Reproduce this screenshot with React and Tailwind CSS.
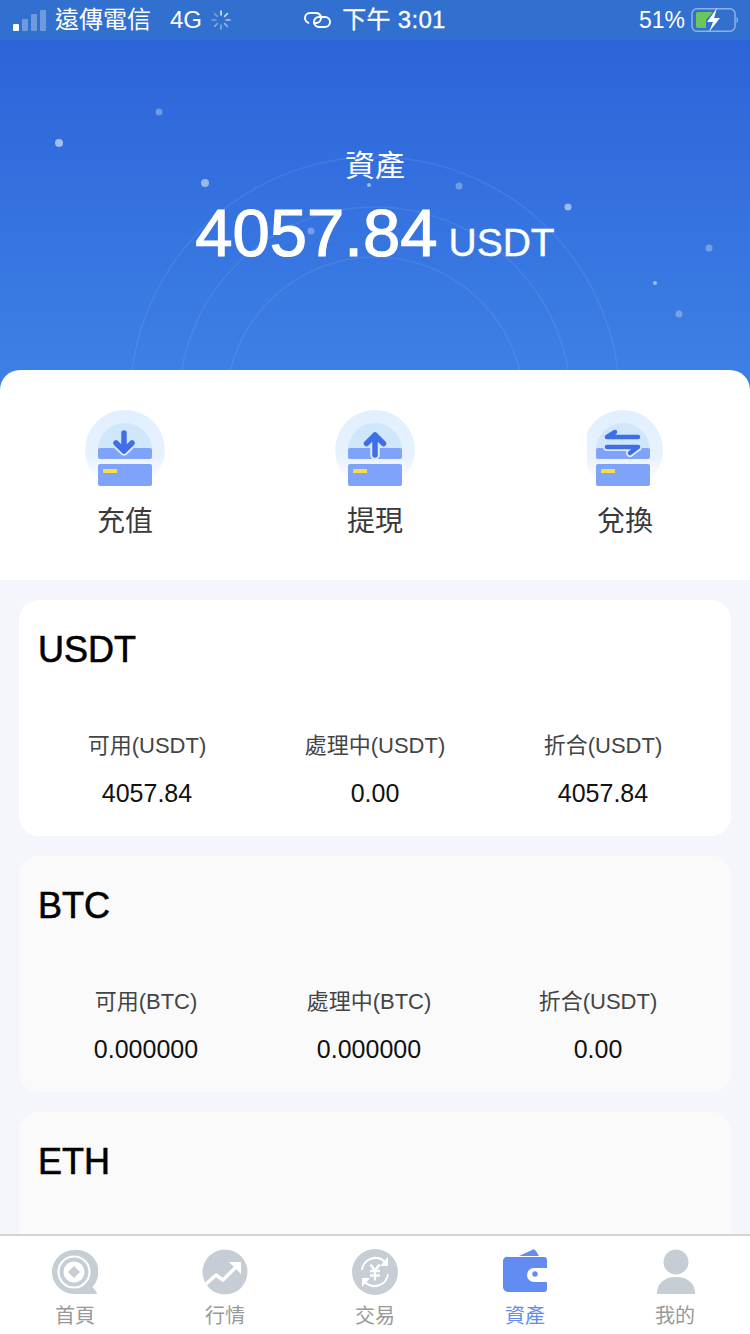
import React from 'react'

const FONT = "font-['Liberation_Sans','Noto_Sans_CJK_TC',sans-serif]"

const COINS = [
  {
    name: 'USDT',
    bg: 'bg-white',
    grid: 'grid-cols-[228px_228px_228px]',
    cols: [
      ['可用(USDT)', '4057.84'],
      ['處理中(USDT)', '0.00'],
      ['折合(USDT)', '4057.84'],
    ],
  },
  {
    name: 'BTC',
    bg: 'bg-[#fafafa]',
    grid: 'grid-cols-[226px_220px_238px]',
    cols: [
      ['可用(BTC)', '0.000000'],
      ['處理中(BTC)', '0.000000'],
      ['折合(USDT)', '0.00'],
    ],
  },
  { name: 'ETH', bg: 'bg-[#fafafa]', grid: 'grid-cols-3', cols: [] },
]

function StatusBar() {
  return (
    <div className="grid h-10 shrink-0 grid-cols-[1fr_auto_1fr] items-center bg-[#3270d0] text-white">
      <div className="flex items-center pl-[13px]">
        <div className="flex items-end gap-[3px]">
          <span className="h-[7px] w-1.5 rounded-[1px] bg-white" />
          <span className="h-3 w-1.5 rounded-[1px] bg-white/30" />
          <span className="h-[17px] w-1.5 rounded-[1px] bg-white/30" />
          <span className="h-[21px] w-1.5 rounded-[1px] bg-white/30" />
        </div>
        <span className="ml-[9px] text-[24px] leading-none">遠傳電信</span>
        <span className="ml-[19px] text-[24px] leading-none">4G</span>
        <svg className="ml-[9px]" width="20" height="20" viewBox="0 0 20 20" stroke="#fff" strokeWidth="1.5" strokeLinecap="round">
          <path d="M10 1v4" opacity="0.9" />
          <path d="M16.400 3.600l-2.800 2.800" opacity="0.75" />
          <path d="M19 10h-4" opacity="0.6" />
          <path d="M16.400 16.400l-2.800-2.800" opacity="0.5" />
          <path d="M10 19v-4" opacity="0.45" />
          <path d="M3.600 16.400l2.800-2.800" opacity="0.4" />
          <path d="M1 10h4" opacity="0.35" />
          <path d="M3.600 3.600l2.800 2.800" opacity="0.3" />
        </svg>
      </div>
      <div className="flex items-center">
        <svg width="27" height="16" viewBox="0 0 27 16" fill="none" stroke="#fff" strokeWidth="2">
          <rect x="1" y="1" width="16" height="10" rx="5" />
          <path d="M13 5h-1a5 5 0 0 0 0 10" stroke="#3270d0" strokeWidth="4" />
          <rect x="10" y="5" width="16" height="10" rx="5" />
          <path d="M17 6a5 5 0 0 1-4 5" stroke="#3270d0" strokeWidth="4" />
          <path d="M12 1a5 5 0 0 1 5 5 5 5 0 0 1-5 5" />
        </svg>
        <span className="ml-[11px] text-[24px] leading-none tracking-[0.3px] [-webkit-text-stroke:0.3px_white]">下午 3:01</span>
      </div>
      <div className="flex items-center justify-end pr-[11px]">
        <span className="text-[23px] leading-none">51%</span>
        <svg className="ml-[6px]" width="48" height="24" viewBox="0 0 48 24">
          <rect x="1" y="0.800" width="43" height="22.400" rx="5" fill="none" stroke="#fff" strokeOpacity="0.45" strokeWidth="1.500" />
          <path d="M45.500 9v6c1 0 1.500-1 1.500-3s-.5-3-1.500-3z" fill="#fff" opacity="0.45" />
          <path d="M7 4h15l-7 8v8H7a2 2 0 0 1-2-2V6a2 2 0 0 1 2-2z" fill="#6cc75b" />
          <path d="M26 0L16 14h6l-4 10 11-14h-6z" fill="#fff" />
        </svg>
      </div>
    </div>
  )
}

function HeroArt() {
  const dots = [
    [59, 103, 4, 0.55], [159, 72, 3.5, 0.3], [205, 143, 4, 0.5], [369, 145, 2, 0.5], [459, 146, 3.5, 0.3],
    [568, 167, 3.5, 0.5], [311, 191, 3.5, 0.3], [709, 208, 3.5, 0.3], [655, 243, 2, 0.5], [679, 274, 3.5, 0.3],
  ]
  return (
    <svg className="absolute inset-0" width="750" height="350" viewBox="0 0 750 350" fill="none">
      <circle cx="375" cy="362" r="245" stroke="#fff" strokeOpacity="0.08" strokeWidth="1.500" />
      <circle cx="375" cy="363" r="196" stroke="#fff" strokeOpacity="0.08" strokeWidth="1.500" />
      <circle cx="375" cy="366" r="149" stroke="#fff" strokeOpacity="0.08" strokeWidth="1.500" />
      {dots.map(([x, y, r, o], i) => (
        <circle key={i} cx={x} cy={y} r={r} fill="#fff" fillOpacity={o} />
      ))}
    </svg>
  )
}

function IconBase({ children, id }) {
  return (
    <svg width="80" height="80" viewBox="0 0 80 80" fill="none">
      <defs>
        <linearGradient id={`ring-${id}`} x1="0" y1="0" x2="0" y2="1">
          <stop offset="0" stopColor="#e1effe" />
          <stop offset="0.6" stopColor="#e8f2fe" />
          <stop offset="0.9" stopColor="#ffffff" />
        </linearGradient>
        <clipPath id={`band-${id}`}>
          <rect x="0" y="38" width="80" height="16" />
        </clipPath>
      </defs>
      <circle cx="40" cy="40" r="40" fill={`url(#ring-${id})`} />
      <path d="M13 40a27 27 0 0 1 54 0z" fill="#d0e6fb" />
      <rect x="13" y="38" width="54" height="11" rx="2" fill="#80a3fa" />
      <rect x="13" y="49" width="54" height="5" fill="#edf4fe" />
      <rect x="13" y="54" width="54" height="22" rx="2" fill="#80a3fa" />
      <rect x="18" y="59" width="14" height="4" fill="#f7dd4b" />
      {children}
    </svg>
  )
}

function DepositIcon() {
  return (
    <IconBase id="in">
      <g clipPath="url(#band-in)">
        <path d="M31 33l8 8 8-8" stroke="#dfeafd" strokeWidth="9.500" strokeLinecap="round" strokeLinejoin="round" />
      </g>
      <path d="M39 23v18M31 33l8 8 8-8" stroke="#3f6fe6" strokeWidth="5.500" strokeLinecap="round" strokeLinejoin="round" />
    </IconBase>
  )
}

function WithdrawIcon() {
  return (
    <IconBase id="out">
      <g clipPath="url(#band-out)">
        <path d="M40 26v19" stroke="#dfeafd" strokeWidth="9.500" strokeLinecap="round" />
      </g>
      <path d="M40 25v20M31.500 33.500L40 25l8.500 8.500" stroke="#3f6fe6" strokeWidth="5.500" strokeLinecap="round" strokeLinejoin="round" />
    </IconBase>
  )
}

function ExchangeIcon() {
  return (
    <div className="flex w-[76px] justify-end overflow-hidden">
      <div className="shrink-0">
        <IconBase id="swap">
          <g clipPath="url(#band-swap)">
            <path d="M24 37h31l-8 6" stroke="#dfeafd" strokeWidth="8" strokeLinecap="round" strokeLinejoin="round" />
          </g>
          <path d="M55 27H24l8-5" stroke="#3f6fe6" strokeWidth="4.500" strokeLinecap="round" strokeLinejoin="round" />
          <path d="M24 37h31l-8 6" stroke="#3f6fe6" strokeWidth="4.500" strokeLinecap="round" strokeLinejoin="round" />
        </IconBase>
      </div>
    </div>
  )
}

function Action({ icon, label }) {
  return (
    <div className="flex w-[250px] flex-col items-center">
      <div className="flex h-20 items-center justify-center">{icon}</div>
      <span className="mt-[14px] text-[28px] leading-[36px] text-[#3a3a3a]">{label}</span>
    </div>
  )
}

function CoinCard({ coin }) {
  return (
    <div className={`h-[236px] shrink-0 rounded-[20px] ${coin.bg} px-[14px]`}>
      <div className="pl-[5px] pt-[28px] text-[36px] leading-[44px] text-black [-webkit-text-stroke:0.6px_black]">{coin.name}</div>
      <div className={`mt-[59px] grid ${coin.grid}`}>
        {coin.cols.map(([label, value]) => (
          <div key={label} className="flex flex-col items-center">
            <span className="text-[22px] leading-[30px] text-[#444]">{label}</span>
            <span className="mt-[17px] text-[25px] leading-[30px] text-[#111]">{value}</span>
          </div>
        ))}
      </div>
    </div>
  )
}

const TAB_GRAY = '#c6cdd4'

function HomeIcon() {
  return (
    <svg width="46" height="46" viewBox="0 0 46 46">
      <path d="M22 1a22 22 0 1 0 0 44h22c1 0 1-1 .500-2l-4-5A22 22 0 0 0 22 1z" fill={TAB_GRAY} />
      <circle cx="22" cy="23" r="15.500" fill="none" stroke="#fff" strokeWidth="2.200" />
      <circle cx="22" cy="23" r="10.500" fill="#fff" />
      <path d="M22 17l6 6-6 6-6-6z" fill={TAB_GRAY} />
    </svg>
  )
}

function MarketIcon() {
  return (
    <svg width="46" height="46" viewBox="0 0 46 46">
      <circle cx="23" cy="23" r="22.500" fill={TAB_GRAY} />
      <path d="M4 35l10-9 7 5 14-14" fill="none" stroke="#fff" strokeWidth="3.500" strokeLinejoin="round" />
      <path d="M27 13h12v12z" fill="#fff" />
    </svg>
  )
}

function TradeIcon() {
  return (
    <svg width="46" height="46" viewBox="0 0 46 46">
      <circle cx="23" cy="23" r="23" fill={TAB_GRAY} />
      <g fill="none" stroke="#fff" strokeWidth="2">
        <path d="M10 21a13.500 13.500 0 0 1 23-8" />
        <path d="M36 25a13.500 13.500 0 0 1-23 8" />
        <path d="M18.500 15.500l4.500 6 4.500-6M23 21.500v10M18 22h10M18 26.500h10" strokeWidth="2.300" />
      </g>
      <path d="M36 8v9h-8z" fill="#fff" />
      <path d="M10 38v-9h8z" fill="#fff" />
    </svg>
  )
}

function WalletIcon() {
  return (
    <svg width="46" height="46" viewBox="0 0 46 46">
      <path d="M17 7l13-6c2-1 3 0 4 1l3 5z" fill="#628cf2" />
      <path d="M6 8h36a3 3 0 0 1 3 3v8H32a5.500 5.500 0 0 0 0 14h13v7a3 3 0 0 1-3 3H6a5 5 0 0 1-5-5V12a4 4 0 0 1 5-4z" fill="#628cf2" />
      <circle cx="33" cy="25" r="2.700" fill="#628cf2" />
    </svg>
  )
}

function UserIcon() {
  return (
    <svg width="46" height="46" viewBox="0 0 46 46">
      <circle cx="24" cy="13" r="12.500" fill={TAB_GRAY} />
      <path d="M5 44c0-10 8-16 19-16s19 6 19 16c0 1-1 1-2 1H7c-1 0-2 0-2-1z" fill={TAB_GRAY} />
    </svg>
  )
}

const TABS = [
  { label: '首頁', icon: <HomeIcon /> },
  { label: '行情', icon: <MarketIcon /> },
  { label: '交易', icon: <TradeIcon /> },
  { label: '資產', icon: <WalletIcon />, active: true },
  { label: '我的', icon: <UserIcon /> },
]

export default function App() {
  return (
    <div className={`flex h-[1334px] w-[750px] flex-col overflow-hidden bg-[#f5f6fb] ${FONT}`}>
      <StatusBar />
      <div className="relative h-[350px] shrink-0 bg-gradient-to-b from-[#2d64da] to-[#3e81e5] text-white">
        <HeroArt />
        <div className="relative flex flex-col items-center pt-[106px]">
          <span className="text-[30px] leading-[40px]">資產</span>
          <div className="mt-[9px] flex items-baseline">
            <span className="text-[67px] leading-[76px] [-webkit-text-stroke:1.2px_white]">4057.84</span>
            <span className="ml-[11px] text-[39px] leading-[46px] [-webkit-text-stroke:0.4px_white]">USDT</span>
          </div>
        </div>
      </div>
      <div className="relative -mt-5 flex h-[210px] shrink-0 justify-between rounded-t-[20px] bg-white pt-10">
        <Action icon={<DepositIcon />} label="充值" />
        <Action icon={<WithdrawIcon />} label="提現" />
        <Action icon={<ExchangeIcon />} label="兌換" />
      </div>
      <div className="flex min-h-0 flex-1 flex-col gap-5 overflow-hidden px-[19px] pt-5">
        {COINS.map((c) => (
          <CoinCard key={c.name} coin={c} />
        ))}
      </div>
      <div className="flex h-[100px] shrink-0 border-t-2 border-[#d4d4d4] bg-white">
        {TABS.map((t) => (
          <div key={t.label} className="flex flex-1 flex-col items-center pt-[13px]">
            <div className="h-[46px]">{t.icon}</div>
            <span className={`mt-[6px] text-[20px] leading-[30px] ${t.active ? 'text-[#628cf2]' : 'text-[#999]'}`}>{t.label}</span>
          </div>
        ))}
      </div>
    </div>
  )
}
